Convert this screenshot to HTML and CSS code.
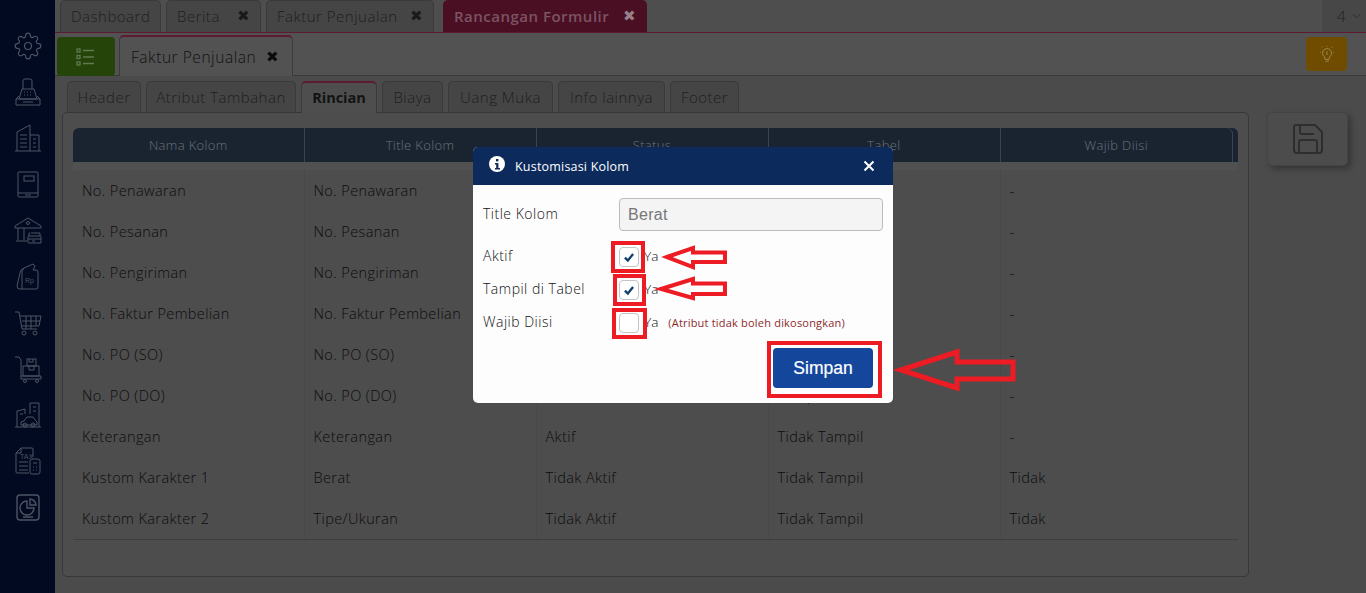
FILE: index.html
```html
<!DOCTYPE html>
<html lang="id">
<head>
<meta charset="utf-8">
<title>Rancangan Formulir</title>
<link rel="stylesheet" href="styles.css">
</head>
<body>
<div class="app">
  <nav class="sidebar">
    <svg class="nav-icon" viewBox="0 0 24 24"><circle cx="12" cy="12" r="3"/><path d="M19.4 15a1.65 1.65 0 0 0 .33 1.82l.06.06a2 2 0 1 1-2.83 2.83l-.06-.06a1.65 1.65 0 0 0-2.82 1.17V21a2 2 0 1 1-4 0v-.09A1.65 1.65 0 0 0 7.26 19.7l-.06.06a2 2 0 1 1-2.83-2.83l.06-.06A1.65 1.65 0 0 0 3.26 14H3a2 2 0 1 1 0-4h.09A1.65 1.65 0 0 0 4.3 7.26l-.06-.06a2 2 0 1 1 2.83-2.83l.06.06A1.65 1.65 0 0 0 10 3.26V3a2 2 0 1 1 4 0v.09a1.65 1.65 0 0 0 2.82 1.17l.06-.06a2 2 0 1 1 2.83 2.83l-.06.06A1.65 1.65 0 0 0 20.74 10H21a2 2 0 1 1 0 4h-.09a1.65 1.65 0 0 0-1.51 1z"/></svg>
    <svg class="nav-icon" viewBox="0 0 28 28"><path d="M9 11V3a2 2 0 0 1 2-2h5a2 2 0 0 1 2 2v8"/><path d="M8 11h12l3 10H5zM2 21h24v6H2zM2 21l3-3M26 21l-3-3M9 24h10"/><path d="M10 14h1M13 14h1M16 14h1M10 17h1M13 17h1M16 17h1"/></svg>
    <svg class="nav-icon" viewBox="0 0 28 28"><path d="M3 27V8L16 1v26M1 27h26M16 11h9v16"/><path d="M6 11h7M6 15h7M6 19h7M6 23h7M19 15h3M19 19h3M19 23h3"/></svg>
    <svg class="nav-icon" viewBox="0 0 28 28"><path d="M4 23V3a1 1 0 0 1 1-1h18a1 1 0 0 1 1 1v23a1 1 0 0 1-1 1H5a1 1 0 0 1-1-1v-3h20"/><rect x="10" y="6" width="10" height="5"/><path d="M11 25h6"/></svg>
    <svg class="nav-icon" viewBox="0 0 28 28"><path d="M1 10 14 2l13 8v2H1zM4 12v12M10 12v12M2 25h11"/><circle cx="14" cy="7" r="1.5"/><path d="M16 17h-1v3M14 25v-4a1 1 0 0 1 1-1h11a1 1 0 0 1 1 1v6H15a1 1 0 0 1-1-1zM14 23h13M18 25h3M17 17h9v3"/></svg>
    <svg class="nav-icon" viewBox="0 0 28 28"><path d="M10 6 19 2l2 2-2 4h3a2 2 0 0 1 2 2v15a2 2 0 0 1-2 2H6a3 3 0 0 1-3-3l3-13a6 6 0 0 1 4-5l-2 3v18"/><text x="11" y="21" class="icon-text">Rp</text></svg>
    <svg class="nav-icon" viewBox="0 0 28 28"><path d="M1 3h4l3 17h15M6 7h21l-2 10H8"/><path d="M8 12h18M12 7v13M17 7v13M22 7v10"/><circle cx="10" cy="24" r="2"/><circle cx="21" cy="24" r="2"/></svg>
    <svg class="nav-icon" viewBox="0 0 28 28"><path d="M1 2h4l2 3v19M7 21h20v3H7"/><rect x="9" y="11" width="16" height="10"/><rect x="13" y="4" width="9" height="7"/><path d="M15 4v3h4V4M15 11v4h5v-4"/><circle cx="11" cy="26" r="1.5"/><circle cx="23" cy="26" r="1.5"/></svg>
    <svg class="nav-icon" viewBox="0 0 28 28"><path d="M1 26h26M3 26V10l8-2v5M16 13V2h9v24"/><path d="M6 13h3M19 6h3M19 10h3"/><path d="M7 24v-3l3-1 3-4h6l3 4 1 1v3z"/><circle cx="11" cy="24" r="2"/><circle cx="19" cy="24" r="2"/></svg>
    <svg class="nav-icon" viewBox="0 0 28 28"><path d="M15 26H3a1 1 0 0 1-1-1V6l5-5h11a1 1 0 0 1 1 1v8M2 6h5V1"/><path d="M5 15h9M5 19h9M5 23h9"/><rect x="16" y="12" width="10" height="15" rx="2"/><path d="M19 16h4M19 20h1M22 20h1M19 23h1M22 23h1"/><text x="6" y="11.500" class="icon-text">TAX</text></svg>
    <svg class="nav-icon nav-icon-heavy" viewBox="0 0 28 28"><rect x="3" y="2" width="22" height="25" rx="3"/><path d="M13 8a7 7 0 1 0 7 7h-7zM16 6a7 7 0 0 1 6 6h-6zM9 24h10"/></svg>
  </nav>

  <main class="main">
    <div class="page-tabs">
      <div class="tabs-list">
        <a class="page-tab tab-dashboard">Dashboard</a>
        <a class="page-tab tab-berita">Berita <span class="x">✖</span></a>
        <a class="page-tab tab-faktur">Faktur Penjualan <span class="x">✖</span></a>
        <a class="page-tab tab-rancangan">Rancangan Formulir <span class="x">✖</span></a>
      </div>
      <div class="tab-count">4
        <svg class="chev" viewBox="0 0 10 6"><path d="M1 1l4 4 4-4"/></svg>
      </div>
    </div>

    <div class="doc-bar">
      <button class="menu-btn" type="button">
        <svg viewBox="0 0 20 20" class="menu-icon"><rect x="1" y="2" width="3" height="3"/><rect x="1" y="8.500" width="3" height="3"/><rect x="1" y="15" width="3" height="3"/><path d="M7 3.500h11M7 10h11M7 16.500h11"/></svg>
      </button>
      <a class="doc-tab">Faktur Penjualan <span class="x x-dark">✖</span></a>
      <button class="hint-btn" type="button">
        <svg viewBox="0 0 20 20" class="hint-icon"><path d="M7 13a5 5 0 1 1 6 0l-1 3H8zM8 18h4M10 7v4M10 1v1M3 8H2M18 8h-1M5 3l-1-1M15 3l1-1"/></svg>
      </button>
    </div>

    <div class="form-tabs">
      <a class="form-tab t1">Header</a>
      <a class="form-tab t2">Atribut Tambahan</a>
      <a class="form-tab t3 active">Rincian</a>
      <a class="form-tab t4">Biaya</a>
      <a class="form-tab t5">Uang Muka</a>
      <a class="form-tab t6">Info lainnya</a>
      <a class="form-tab t7">Footer</a>
    </div>

    <div class="content">
      <section class="panel">
        <table class="grid">
          <thead>
            <tr><th>Nama Kolom</th><th>Title Kolom</th><th>Status</th><th>Tabel</th><th class="last">Wajib Diisi</th></tr>
          </thead>
          <tbody>
            <tr class="spacer"><td colspan="5"></td></tr>
            <tr><td>No. Penawaran</td><td>No. Penawaran</td><td>Aktif</td><td>Tampil</td><td>-</td></tr>
            <tr><td>No. Pesanan</td><td>No. Pesanan</td><td>Aktif</td><td>Tampil</td><td>-</td></tr>
            <tr><td>No. Pengiriman</td><td>No. Pengiriman</td><td>Aktif</td><td>Tampil</td><td>-</td></tr>
            <tr><td>No. Faktur Pembelian</td><td>No. Faktur Pembelian</td><td>Aktif</td><td>Tampil</td><td>-</td></tr>
            <tr><td>No. PO (SO)</td><td>No. PO (SO)</td><td>Aktif</td><td>Tampil</td><td>-</td></tr>
            <tr><td>No. PO (DO)</td><td>No. PO (DO)</td><td>Aktif</td><td>Tampil</td><td>-</td></tr>
            <tr><td>Keterangan</td><td>Keterangan</td><td>Aktif</td><td>Tidak Tampil</td><td>-</td></tr>
            <tr><td>Kustom Karakter 1</td><td>Berat</td><td>Tidak Aktif</td><td>Tidak Tampil</td><td>Tidak</td></tr>
            <tr><td>Kustom Karakter 2</td><td>Tipe/Ukuran</td><td>Tidak Aktif</td><td>Tidak Tampil</td><td>Tidak</td></tr>
          </tbody>
        </table>
      </section>
      <button class="save-btn" type="button">
        <svg viewBox="0 0 30 30" class="save-icon"><path d="M3 1h19l7 7v18a3 3 0 0 1-3 3H4a3 3 0 0 1-3-3V3a2 2 0 0 1 2-2z"/><path d="M7 1v7a2 2 0 0 0 2 2h12M6 29V18a2 2 0 0 1 2-2h14a2 2 0 0 1 2 2v11"/></svg>
      </button>
    </div>
  </main>
</div>

<div class="modal">
  <header class="modal-head">
    <svg class="info" viewBox="0 0 16 16"><circle cx="8" cy="8" r="8"/><rect class="info-mark" x="7" y="3" width="2.400" height="2.400"/><path class="info-mark" d="M6 7h3.400v5H11v1.400H6V12h1.200V8.400H6z"/></svg>
    <span class="modal-title">Kustomisasi Kolom</span>
    <svg class="close" viewBox="0 0 12 12"><path d="M1.500 1.500l9 9M10.500 1.500l-9 9"/></svg>
  </header>
  <div class="modal-body">
    <div class="field field-title">
      <label class="field-label">Title Kolom</label>
      <input class="field-input" value="Berat" disabled>
    </div>
    <div class="field field-check">
      <label class="field-label">Aktif</label>
      <span class="check on"><svg viewBox="0 0 12 12"><path d="M2.500 6.500l2.500 2.500 4.500-5.500"/></svg></span>
      <span class="ya">Ya</span>
    </div>
    <div class="field field-check">
      <label class="field-label">Tampil di Tabel</label>
      <span class="check on"><svg viewBox="0 0 12 12"><path d="M2.500 6.500l2.500 2.500 4.500-5.500"/></svg></span>
      <span class="ya">Ya</span>
    </div>
    <div class="field field-check">
      <label class="field-label">Wajib Diisi</label>
      <span class="check"></span>
      <span class="ya">Ya</span>
      <span class="note">(Atribut tidak boleh dikosongkan)</span>
    </div>
    <div class="modal-foot">
      <button class="simpan" type="button">Simpan</button>
    </div>
  </div>
</div>

<svg class="marks" viewBox="0 0 1366 593">
  <rect x="613" y="243" width="30" height="28"/>
  <rect x="615" y="276" width="29" height="28"/>
  <rect x="614" y="310" width="31" height="27"/>
  <rect x="769" y="343" width="111" height="53"/>
  <path d="M667 257l26-9v4.500h32V262H693v5z"/>
  <path d="M661 289l32-10v4.500h32V294H693v4z"/>
  <path class="big" d="M901 370l56-18v10h56v17h-56v9z"/>
</svg>
</body>
</html>
```

FILE: styles.css
```css
* { box-sizing: border-box; }
html, body { margin: 0; height: 100%; overflow: hidden; }
body { font-family: "Open Sans", "Noto Sans", sans-serif; font-size: 14px; font-weight: 300; color: #151515; background: #4b4b4b; }
.app { display: flex; height: 593px; }

/* sidebar */
.sidebar { width: 55px; flex: none; background: #010a21; display: flex; flex-direction: column; align-items: center; padding-top: 32px; gap: 18.100px; }
.nav-icon { width: 28px; height: 28px; fill: none; stroke: #4e5464; stroke-width: 1; flex: none; }
.nav-icon-heavy { stroke-width: 1.400; }
.icon-text { font-family: "Liberation Sans", sans-serif; font-size: 7px; fill: #4e5464; stroke: none; }

.main { flex: 1; min-width: 0; display: flex; flex-direction: column; background: #4b4b4b; }

/* page tabs */
.page-tabs { height: 33px; flex: none; display: flex; justify-content: space-between; border-bottom: 1px solid #5c1a33; background: #4e4e4e; }
.tabs-list { display: flex; padding-left: 5px; }
.page-tab { height: 32px; display: flex; align-items: center; justify-content: space-between; padding: 0 10px 2px; margin-right: 5px; border: 1px solid #3a3a3a; border-bottom: 0; border-radius: 5px 5px 0 0; background: #454545; font-size: 15px; letter-spacing: .5px; color: #1e1e1e; }
.tab-dashboard { width: 101px; }
.tab-berita { width: 95px; }
.tab-faktur { width: 168px; margin-right: 9px; }
.tab-rancangan { width: 204px; background: #4b0f24; border-color: #4b0f24; color: #7c5363; font-weight: 600; letter-spacing: .5px; }
.x { font-size: 15px; color: #1a1a1a; line-height: 1; letter-spacing: 0; font-weight: 400; }
.tab-rancangan .x { color: #96808a; }
.tab-count { width: 44px; height: 32px; display: flex; align-items: center; gap: 6px; padding-left: 15px; font-size: 15px; color: #1e1e1e; background: #474747; }
.chev { width: 9px; height: 6px; fill: none; stroke: #2a2a2a; stroke-width: 1; }

/* doc bar */
.doc-bar { height: 43px; flex: none; display: flex; align-items: flex-end; border-bottom: 1px solid #3a3a3a; padding: 0 19px 0 2px; background: #525252; }
.menu-btn { width: 58px; height: 39px; margin: 0 4px -1px 0; border: 0; border-radius: 4px; background: #254409; display: flex; align-items: center; justify-content: center; padding: 0; }
.menu-icon { width: 20px; height: 20px; fill: none; stroke: #62784f; stroke-width: 1.300; }
.doc-tab { width: 174px; height: 41px; margin-bottom: -1px; border: 1px solid #3a3a3a; border-top: 2px solid #5c1a33; border-bottom: 0; border-radius: 5px 5px 0 0; background: #525252; display: flex; align-items: center; justify-content: flex-start; padding-left: 11px; gap: 10px; font-size: 15.500px; letter-spacing: .55px; color: #111; }
.x-dark { color: #0c0c0c; }
.hint-btn { width: 41px; height: 34px; margin-left: auto; align-self: flex-start; margin-top: 4px; border: 0; border-radius: 4px; background: #6f4c00; display: flex; align-items: center; justify-content: center; padding: 0; }
.hint-icon { width: 18px; height: 18px; fill: none; stroke: #a08c58; stroke-width: 1; }

/* form tabs */
.form-tabs { height: 36px; flex: none; display: flex; align-items: flex-end; gap: 5px; padding-left: 12px; }
.form-tab { height: 31px; display: flex; align-items: center; justify-content: center; padding-bottom: 1px; border: 1px solid #3a3a3a; border-bottom: 0; border-radius: 5px 5px 0 0; background: #454545; font-size: 15px; letter-spacing: .5px; color: #1e1e1e; }
.t1 { width: 74px; } .t2 { width: 150px; } .t3 { width: 76px; } .t4 { width: 61px; } .t5 { width: 105px; } .t6 { width: 107px; } .t7 { width: 69px; }
.form-tab.active { position: relative; height: 32px; margin-bottom: -1px; background: #4e4e4e; border-top: 2px solid #5c1a33; color: #131313; font-weight: 700; letter-spacing: 0; font-size: 14.500px; }

/* content */
.content { display: flex; align-items: flex-start; padding-left: 7px; }
.panel { width: 1187px; height: 465px; border: 1px solid #383838; border-radius: 5px; padding: 15px 10px 0; background: #4d4d4d; }
.grid { width: 1165px; border-collapse: collapse; table-layout: fixed; }
.grid th { height: 34px; background: #1a2430; color: #69737e; font-size: 13px; font-weight: 300; letter-spacing: .35px; text-align: center; border-right: 1px solid #3a4450; padding: 0; width: 232px; }
.grid th:first-child { width: 231px; border-top-left-radius: 6px; }
.grid th.last { width: 238px; padding-right: 6px; border-right: 0; border-top-right-radius: 6px; box-shadow: inset -5px 0 0 #1a2430, inset -6px 0 0 #3a4450; }
.grid .spacer td { height: 8px; padding: 0; border: 0; background: #515151; }
.grid td { height: 41px; padding: 0 9px; font-size: 14.500px; letter-spacing: .4px; color: #0c0c0c; border-right: 1px solid #484848; }
.grid td:last-child { border-right: 0; }
.grid tbody tr:last-child td { border-bottom: 1px solid #3e3e3e; }

.save-btn { width: 81px; height: 54px; margin-left: 18px; border: 1px solid #444; border-radius: 5px; background: #4c4c4c; box-shadow: 3px 3px 6px rgba(0,0,0,.3); display: flex; align-items: center; justify-content: center; padding: 0; }
.save-icon { width: 30px; height: 30px; fill: none; stroke: #2e2e2e; stroke-width: 2; }

/* modal */
.modal { position: absolute; z-index: 11; left: 473px; top: 147px; width: 420px; height: 256px; background: #fdfdfd; border-radius: 5px; overflow: hidden; color: #111; font-weight: 400; }
.modal-head { height: 38px; background: #0c2a5c; display: flex; align-items: center; padding: 0 18px 0 16px; color: #fff; }
.info { width: 16px; height: 16px; fill: #fff; margin: -4px 0 0 0; }
.info-mark { fill: #0c2a5c; }
.modal-title { margin-left: 10px; font-size: 12.500px; letter-spacing: .2px; }
.close { width: 12px; height: 12px; margin-left: auto; fill: none; stroke: #fff; stroke-width: 2; }
.modal-body { padding: 13px 10px 0; }
.field { display: flex; align-items: center; }
.field-label { width: 136px; padding-bottom: 2px; font-size: 14px; font-weight: 300; letter-spacing: .5px; }
.field-title { height: 33px; margin-bottom: 9px; }
.field-input { width: 264px; height: 33px; border: 1px solid #bbb; border-radius: 4px; background: #f4f4f4; padding: 0 8px; font: 16px "Liberation Sans", sans-serif; letter-spacing: .3px; color: #777; }
.field-check { height: 33px; }
.check { width: 20px; height: 20px; border: 1px solid #c4c4c4; border-radius: 4px; background: #fff; display: flex; align-items: center; justify-content: center; }
.check svg { width: 14px; height: 14px; fill: none; stroke: #123f6d; stroke-width: 2; }
.ya { margin-left: 5px; padding-bottom: 2px; font-size: 13.500px; font-weight: 300; }
.note { margin-left: 10px; font-size: 11px; letter-spacing: .2px; color: #8c2a2a; }
.modal-foot { display: flex; justify-content: flex-end; padding: 9px 10px 0 0; }
.simpan { width: 100px; height: 40px; border: 0; border-radius: 4px; background: #14479c; color: #fff; font: 17.500px "Liberation Sans", sans-serif; -webkit-text-stroke: .2px #fff; padding: 0; }

.marks { position: absolute; z-index: 12; left: 0; top: 0; width: 1366px; height: 593px; fill: none; stroke: #ed1c24; stroke-width: 4; pointer-events: none; }
.marks .big { stroke-width: 5; }
```
